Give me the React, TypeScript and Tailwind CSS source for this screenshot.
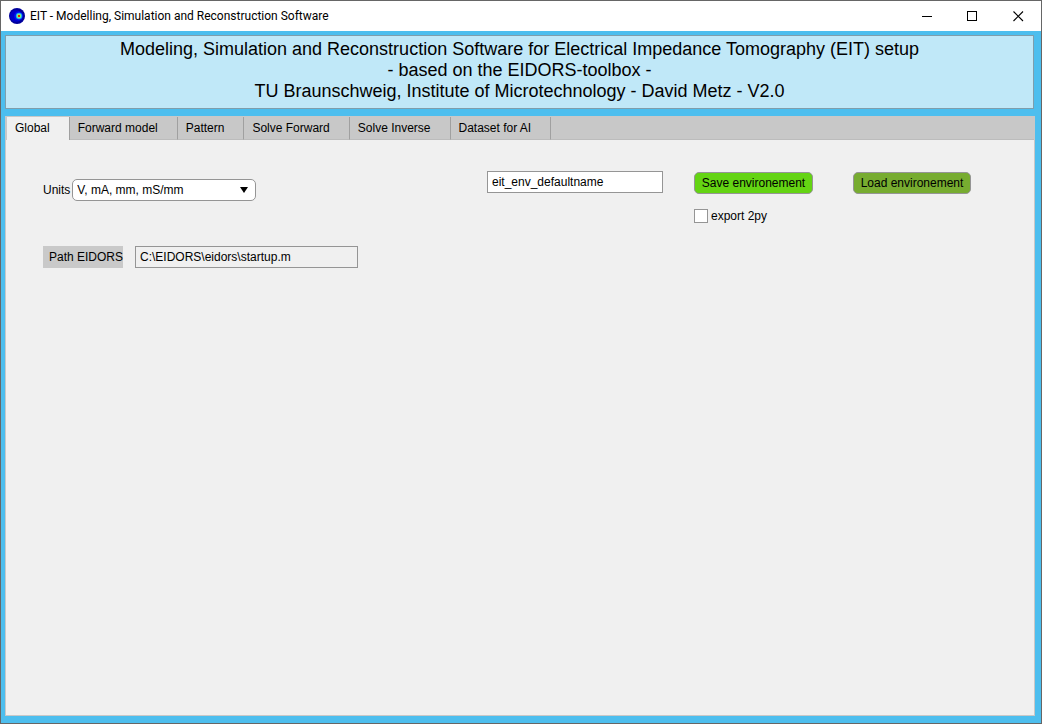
import { useState } from "react";

const tabs = ["Global", "Forward model", "Pattern", "Solve Forward", "Solve Inverse", "Dataset for AI"];

function AppIcon() {
  return (
    <svg className="size-4" viewBox="0 0 16 16" aria-hidden="true">
      <circle cx="8" cy="8" r="8" fill="#00009c" />
      <circle cx="7" cy="8" r="6" fill="#0000c8" />
      <circle cx="9.5" cy="8" r="4.5" fill="#0010ee" />
      <circle cx="10" cy="8" r="3.2" fill="#109cff" />
      <circle cx="10" cy="8" r="2.4" fill="#80f080" />
      <rect x="9" y="7" width="2" height="2" fill="#f02000" />
    </svg>
  );
}

function TitleBar() {
  return (
    <div className="flex h-[30px] shrink-0 items-center bg-white pl-2 font-[Roboto,sans-serif]">
      <AppIcon />
      <h1 className="ml-[5px] flex-1 text-[12px] leading-4 whitespace-nowrap">
        EIT - Modelling, Simulation and Reconstruction Software
      </h1>
      <button type="button" aria-label="Minimize" className="flex h-full w-[45px] items-center justify-center">
        <svg className="size-[11px]" viewBox="0 0 11 11" shapeRendering="crispEdges">
          <path d="M0 5h10v1H0z" />
        </svg>
      </button>
      <button type="button" aria-label="Maximize" className="flex h-full w-[45px] items-center justify-center">
        <svg className="size-[11px]" viewBox="0 0 11 11" fill="none" stroke="#000" shapeRendering="crispEdges">
          <path d="M.5 .5h9v9h-9z" />
        </svg>
      </button>
      <button type="button" aria-label="Close" className="flex h-full w-[46px] items-center justify-center">
        <svg className="size-[11px]" viewBox="0 0 11 11" fill="none" stroke="#000" strokeWidth="1.1">
          <path d="M.5 .5l9.5 9.5M10 .5l-9.5 9.5" />
        </svg>
      </button>
    </div>
  );
}

function GlobalPanel() {
  return (
    <div className="flex items-start justify-between pt-[31px] pr-[63px] pl-[37px]">
      <div className="mt-2 flex flex-col gap-[45px]">
        <div className="flex items-center gap-[2px]">
          <label htmlFor="units">Units</label>
          <div className="relative">
            <select
              id="units"
              className="block h-[22px] w-[184px] appearance-none rounded-[5px] border border-[#959595] bg-white pr-6 pb-px pl-1"
            >
              <option>V, mA, mm, mS/mm</option>
            </select>
            <svg className="pointer-events-none absolute top-2 right-2 h-[6px] w-2" viewBox="0 0 8 6" aria-hidden="true">
              <path d="M0 0h8L4 6z" />
            </svg>
          </div>
        </div>
        <div className="flex items-center gap-3">
          <label htmlFor="path" className="h-[22px] w-20 bg-[#c9c9c9] pl-[6px] leading-[22px] whitespace-nowrap">
            Path EIDORS
          </label>
          <input
            id="path"
            readOnly
            defaultValue="C:\EIDORS\eidors\startup.m"
            className="h-[22px] w-[223px] border border-[#959595] bg-[#f0f0f0] px-1 pb-px"
          />
        </div>
      </div>
      <div className="flex items-start">
        <input
          aria-label="Environment name"
          defaultValue="eit_env_defaultname"
          className="h-[22px] w-44 border border-[#959595] bg-white px-1 pb-px"
        />
        <div className="mt-px ml-[31px] flex flex-col gap-[15px]">
          <button type="button" className="h-[22px] w-[119px] rounded-[5px] border border-[#959595] bg-[#64d413]">
            Save environement
          </button>
          <label className="flex h-[14px] items-center gap-[3px]">
            <input type="checkbox" className="size-[14px] appearance-none border border-[#959595] bg-white checked:bg-[#4dbeee]" />
            export 2py
          </label>
        </div>
        <button type="button" className="mt-px ml-10 h-[22px] w-[118px] rounded-[5px] border border-[#959595] bg-[#77ac30]">
          Load environement
        </button>
      </div>
    </div>
  );
}

export default function App() {
  const [active, setActive] = useState(0);
  return (
    <div className="flex min-h-screen flex-col border border-[#666666] bg-[#4dbeee] font-['Liberation_Sans',Arial,sans-serif] text-[12px] leading-[14px] text-black">
      <TitleBar />
      <div className="flex flex-1 flex-col gap-[7px] pt-1 pr-[6px] pb-[7px] pl-1">
        <header className="mr-px border border-[#7f9eac] bg-[#c0e8f8] pt-[3px] pb-[6px] text-center text-[18px] leading-[21px]">
          <p>Modeling, Simulation and Reconstruction Software for Electrical Impedance Tomography (EIT) setup</p>
          <p>- based on the EIDORS-toolbox -</p>
          <p>TU Braunschweig, Institute of Microtechnology - David Metz - V2.0</p>
        </header>
        <main className="flex flex-1 flex-col border border-[#c8c8c8] bg-[#f0f0f0]">
          <div role="tablist" className="flex h-[23px] bg-[#c8c8c8] pl-px">
            {tabs.map((name, i) => (
              <button
                key={name}
                type="button"
                role="tab"
                aria-selected={i === active}
                onClick={() => setActive(i)}
                className={
                  i === active
                    ? "border-r border-[#a0a0a0] bg-[#f0f0f0] pr-[19px] pb-px pl-2 whitespace-nowrap"
                    : "border-r border-b border-r-[#a0a0a0] border-b-[#bcbcbc] pr-[19px] pl-2 whitespace-nowrap"
                }
              >
                {name}
              </button>
            ))}
            <div className="flex-1 border-b border-[#bcbcbc]" />
          </div>
          <div role="tabpanel">{active === 0 && <GlobalPanel />}</div>
        </main>
      </div>
    </div>
  );
}
